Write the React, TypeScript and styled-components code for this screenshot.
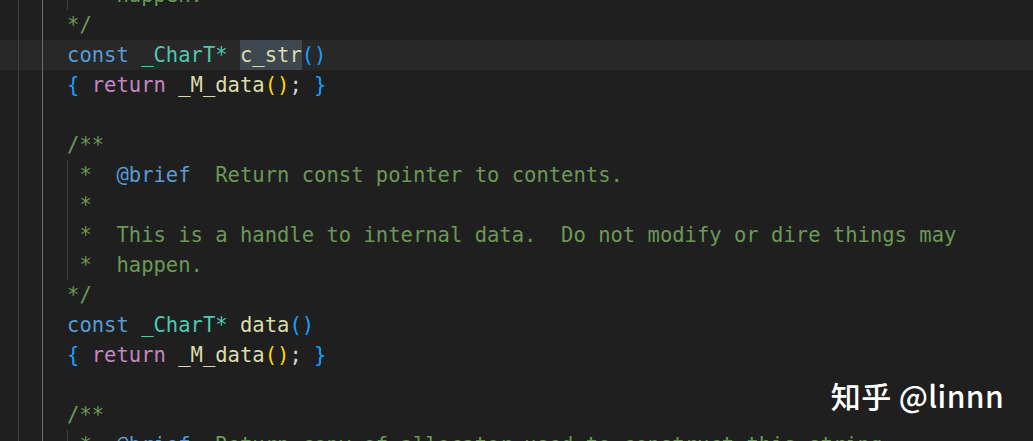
import React from "react";
import styled, { createGlobalStyle } from "styled-components";

const Global = createGlobalStyle`
  html, body { margin: 0; padding: 0; background: #1f1f1f; }
  body { overflow: hidden; }
`;

const C = {
  kw: "#569cd6",
  type: "#4ec9b0",
  fn: "#dcdcaa",
  ctrl: "#c586c0",
  punc: "#d4d4d4",
  com: "#6a9955",
  tag: "#569cd6",
  br1: "#179fff",
  br2: "#ffd700",
};

const Editor = styled.div`
  position: relative;
  width: 1033px;
  height: 441px;
  overflow: hidden;
  background: #1f1f1f;
`;

const Lines = styled.div`
  display: flex;
  flex-direction: column;
  margin-top: -20px;
  font-family: "DejaVu Sans Mono", "Liberation Mono", monospace;
  font-size: 20.53px;
`;

const Row = styled.div<{ $current?: boolean }>`
  display: flex;
  align-items: stretch;
  height: 30px;
  line-height: 30px;
  padding-left: 17.6px;
  white-space: pre;
  background: ${(p) => (p.$current ? "#282828" : "transparent")};
`;

const Guide = styled.span<{ $active?: boolean; $cols: number }>`
  flex: none;
  box-sizing: border-box;
  width: ${(p) => p.$cols * 12.36}px;
  border-left: 1px solid ${(p) => (p.$active ? "#6c6c6c" : "#3e3e3e")};
`;

const Code = styled.span`
  display: inline-block;
`;

const Tok = styled.span<{ $c: string; $sel?: boolean }>`
  color: ${(p) => p.$c};
  background: ${(p) => (p.$sel ? "#3e4650" : "transparent")};
  display: inline-block;
  height: 30px;
`;

const Watermark = styled.div`
  position: absolute;
  right: 29px;
  top: 375px;
  font-family: "Noto Sans CJK SC", "Noto Sans", sans-serif;
  font-size: 30px;
  font-weight: 500;
  line-height: 40px;
  color: #ffffff;
  letter-spacing: 0.4px;
`;

type T = [string, string, boolean?];
type Line = { toks: T[]; star?: boolean; current?: boolean };

const L: Line[] = [
  { toks: [[" *  happen.", C.com]], star: true },
  { toks: [["*/", C.com]] },
  {
    current: true,
    toks: [
      ["const", C.kw],
      [" ", C.punc],
      ["_CharT*", C.type],
      [" ", C.punc],
      ["c_str", C.fn, true],
      ["()", C.br1],
    ],
  },
  {
    toks: [
      ["{", C.br1],
      [" ", C.punc],
      ["return", C.ctrl],
      [" ", C.punc],
      ["_M_data", C.fn],
      ["()", C.br2],
      ["; ", C.punc],
      ["}", C.br1],
    ],
  },
  { toks: [] },
  { toks: [["/**", C.com]] },
  {
    star: true,
    toks: [
      [" *  ", C.com],
      ["@brief", C.tag],
      ["  Return const pointer to contents.", C.com],
    ],
  },
  { star: true, toks: [[" *", C.com]] },
  {
    star: true,
    toks: [[" *  This is a handle to internal data.  Do not modify or dire things may", C.com]],
  },
  { star: true, toks: [[" *  happen.", C.com]] },
  { toks: [["*/", C.com]] },
  {
    toks: [
      ["const", C.kw],
      [" ", C.punc],
      ["_CharT*", C.type],
      [" ", C.punc],
      ["data", C.fn],
      ["()", C.br1],
    ],
  },
  {
    toks: [
      ["{", C.br1],
      [" ", C.punc],
      ["return", C.ctrl],
      [" ", C.punc],
      ["_M_data", C.fn],
      ["()", C.br2],
      ["; ", C.punc],
      ["}", C.br1],
    ],
  },
  { toks: [] },
  { toks: [["/**", C.com]] },
  {
    star: true,
    toks: [
      [" *  ", C.com],
      ["@brief", C.tag],
      ["  Return copy of allocator used to construct this string.", C.com],
    ],
  },
];

export default function App() {
  return (
    <>
      <Global />
      <Editor>
        <Lines>
          {L.map((line, i) => {
            const toks = line.star
              ? ([[line.toks[0][0].slice(1), line.toks[0][1]] as T, ...line.toks.slice(1)])
              : line.toks;
            return (
              <Row key={i} $current={line.current}>
                <Guide $cols={2} />
                <Guide $cols={2} $active />
                {line.star && <Guide $cols={1} />}
                <Code>
                  {toks.map((t, j) => (
                    <Tok key={j} $c={t[1]} $sel={t[2]}>
                      {t[0]}
                    </Tok>
                  ))}
                </Code>
              </Row>
            );
          })}
        </Lines>
        <Watermark>知乎 @linnn</Watermark>
      </Editor>
    </>
  );
}
